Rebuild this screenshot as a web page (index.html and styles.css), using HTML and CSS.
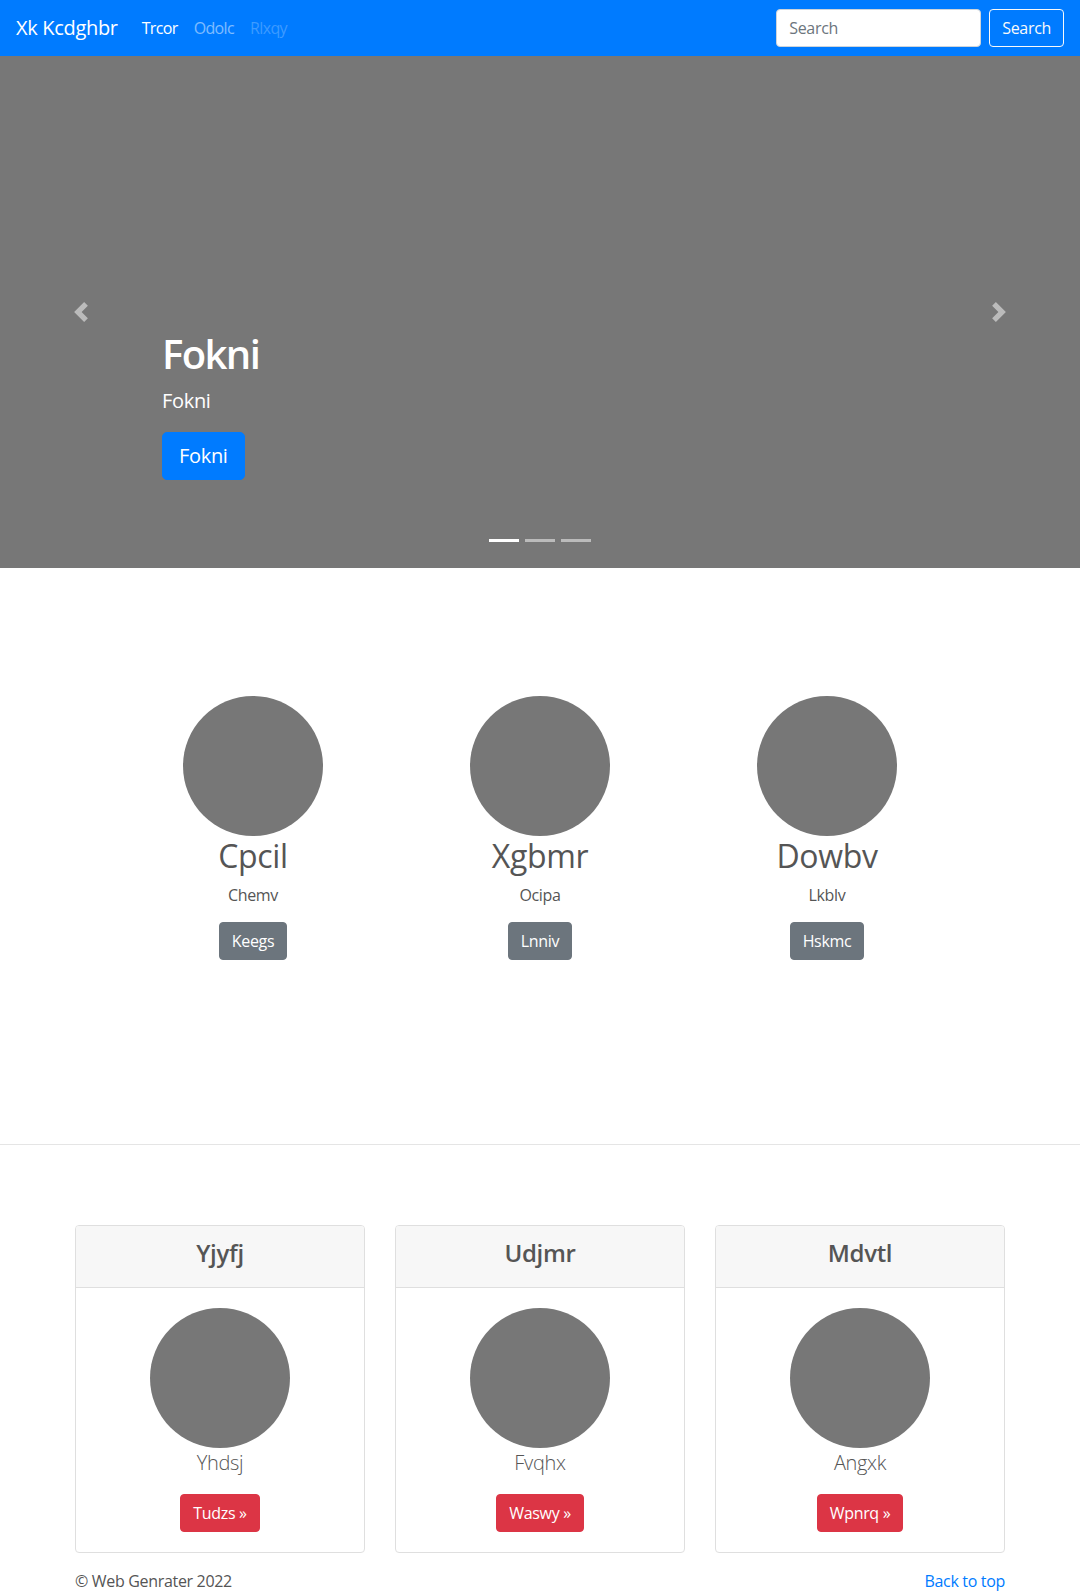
FILE: index.html
```html
<!DOCTYPE html>
<html lang="en">
<head>
<meta charset="utf-8">
<title>Xk Kcdghbr</title>
<link rel="stylesheet" href="styles.css">
</head>
<body>
<nav class="navbar">
  <a class="brand" href="#">Xk Kcdghbr</a>
  <ul class="nav">
    <li><a class="nav-link active" href="#">Trcor</a></li>
    <li><a class="nav-link" href="#">Odolc</a></li>
    <li><a class="nav-link disabled" href="#">Rlxqy</a></li>
  </ul>
  <form class="search">
    <input class="search-input" type="text" placeholder="Search">
    <button class="btn btn-outline-light" type="button">Search</button>
  </form>
</nav>

<div class="carousel">
  <a class="carousel-control prev" href="#"><svg width="20" height="20" viewBox="0 0 8 8"><path fill="#fff" d="M5.25 0l-4 4 4 4 1.5-1.5L4.25 4l2.5-2.5L5.25 0z"/></svg></a>
  <div class="carousel-caption">
    <h1 class="caption-title">Fokni</h1>
    <p class="caption-text">Fokni</p>
    <a class="btn btn-lg btn-primary" href="#">Fokni</a>
  </div>
  <a class="carousel-control next" href="#"><svg width="20" height="20" viewBox="0 0 8 8"><path fill="#fff" d="M2.75 0l-1.5 1.5L3.75 4l-2.5 2.5L2.75 8l4-4-4-4z"/></svg></a>
  <ol class="indicators">
    <li class="indicator active"></li>
    <li class="indicator"></li>
    <li class="indicator"></li>
  </ol>
</div>

<section class="marketing">
  <div class="feature">
    <div class="circle"></div>
    <h2 class="feature-title">Cpcil</h2>
    <p class="feature-text">Chemv</p>
    <a class="btn btn-secondary" href="#">Keegs</a>
  </div>
  <div class="feature">
    <div class="circle"></div>
    <h2 class="feature-title">Xgbmr</h2>
    <p class="feature-text">Ocipa</p>
    <a class="btn btn-secondary" href="#">Lnniv</a>
  </div>
  <div class="feature">
    <div class="circle"></div>
    <h2 class="feature-title">Dowbv</h2>
    <p class="feature-text">Lkblv</p>
    <a class="btn btn-secondary" href="#">Hskmc</a>
  </div>
</section>

<hr class="divider">

<section class="cards">
  <div class="card">
    <div class="card-header"><h4 class="card-title">Yjyfj</h4></div>
    <div class="card-body">
      <div class="circle"></div>
      <p class="lead">Yhdsj</p>
      <a class="btn btn-danger" href="#">Tudzs »</a>
    </div>
  </div>
  <div class="card">
    <div class="card-header"><h4 class="card-title">Udjmr</h4></div>
    <div class="card-body">
      <div class="circle"></div>
      <p class="lead">Fvqhx</p>
      <a class="btn btn-danger" href="#">Waswy »</a>
    </div>
  </div>
  <div class="card">
    <div class="card-header"><h4 class="card-title">Mdvtl</h4></div>
    <div class="card-body">
      <div class="circle"></div>
      <p class="lead">Angxk</p>
      <a class="btn btn-danger" href="#">Wpnrq »</a>
    </div>
  </div>
</section>

<footer class="footer">
  <p class="copy">© Web Genrater 2022</p>
  <a class="back" href="#">Back to top</a>
</footer>
</body>
</html>
```

FILE: styles.css
```css
* { box-sizing: border-box; }

body {
  margin: 0;
  font-family: "Open Sans", "Noto Sans", "Liberation Sans", sans-serif;
  font-size: 16px;
  line-height: 1.5;
  letter-spacing: -0.02em;
  color: #555;
  background: #fff;
}

a { text-decoration: none; }

/* Navbar */
.navbar {
  height: 56px;
  background: #007bff;
  padding: 8px 16px;
  display: flex;
  align-items: center;
}
.brand {
  color: #fff;
  font-size: 20px;
  line-height: 30px;
  margin-right: 16px;
}
.nav {
  list-style: none;
  margin: 0;
  padding: 0;
  display: flex;
}
.nav-link {
  display: block;
  padding: 8px;
  letter-spacing: -0.04em;
  color: rgba(255,255,255,.5);
}
.nav-link.active { color: #fff; }
.nav-link.disabled { color: rgba(255,255,255,.25); }

.search {
  margin-left: auto;
  display: flex;
  align-items: center;
  gap: 8px;
}
.search-input {
  width: 205px;
  height: 38px;
  padding: 6px 12px;
  font: inherit;
  letter-spacing: inherit;
  color: #495057;
  border: 1px solid #ced4da;
  border-radius: 4px;
  background: #fff;
}
.search-input::placeholder { color: #6c757d; }

/* Buttons */
.btn {
  display: inline-block;
  font: inherit;
  letter-spacing: inherit;
  line-height: 24px;
  padding: 6px 12px;
  border: 1px solid transparent;
  border-radius: 4px;
  color: #fff;
  cursor: pointer;
}
.btn-outline-light {
  background: transparent;
  color: #f8f9fa;
  border-color: #f8f9fa;
}
.btn-lg {
  font-size: 20px;
  line-height: 30px;
  padding: 8px 16px;
  border-radius: 5px;
}
.btn-primary { background: #007bff; border-color: #007bff; }
.btn-secondary { background: #6c757d; border-color: #6c757d; }
.btn-danger { background: #dc3545; border-color: #dc3545; }

/* Carousel */
.carousel {
  position: relative;
  height: 512px;
  background: #777;
}
.carousel-control {
  position: absolute;
  top: 0;
  bottom: 0;
  width: 15%;
  display: flex;
  align-items: center;
  justify-content: center;
  opacity: .5;
}
.carousel-control svg { display: block; }
.carousel-control.prev { left: 0; }
.carousel-control.next { right: 0; }

.carousel-caption {
  position: absolute;
  left: 15%;
  right: 15%;
  bottom: 88px;
  color: #fff;
}
.caption-title {
  margin: 0 0 8px;
  font-size: 40px;
  line-height: 48px;
  font-weight: 600;
  letter-spacing: -0.04em;
}
.caption-text {
  margin: 0 0 16px;
  font-size: 20px;
  line-height: 30px;
}

.indicators {
  position: absolute;
  left: 0;
  right: 0;
  bottom: 16px;
  margin: 0;
  padding: 0;
  list-style: none;
  display: flex;
  justify-content: center;
}
.indicator {
  width: 30px;
  height: 23px;
  margin: 0 3px;
  border-top: 10px solid transparent;
  border-bottom: 10px solid transparent;
  background: #fff;
  background-clip: padding-box;
  opacity: .5;
}
.indicator.active { opacity: 1; }

/* Marketing */
.marketing {
  width: 861px;
  margin: 0 auto;
  padding-top: 128px;
  display: grid;
  grid-template-columns: repeat(3, 1fr);
}
.feature {
  display: flex;
  flex-direction: column;
  align-items: center;
  text-align: center;
}
.circle {
  width: 140px;
  height: 140px;
  border-radius: 50%;
  background: #777;
}
.feature-title {
  margin: 1px 0 8px;
  font-size: 32px;
  line-height: 38.4px;
  font-weight: 400;
}
.feature-text {
  margin: 0 0 15px;
}

.divider {
  margin: 184px 0 80px;
  border: 0;
  border-top: 1px solid #e5e5e5;
  height: 0;
}

/* Cards */
.cards {
  width: 930px;
  margin: 0 auto;
  display: grid;
  grid-template-columns: repeat(3, 1fr);
  gap: 30px;
}
.card {
  border: 1px solid #dfdfdf;
  border-radius: 4px;
  overflow: hidden;
  text-align: center;
}
.card-header {
  background: #f7f7f7;
  padding: 13px 20px 11px;
  border-bottom: 1px solid #dfdfdf;
}
.card-title {
  margin: 0 0 8px;
  font-size: 24px;
  line-height: 28.8px;
  font-weight: 600;
}
.card-body {
  padding: 20px;
  display: flex;
  flex-direction: column;
  align-items: center;
}
.lead {
  margin: 0 0 16px;
  font-size: 20px;
  line-height: 30px;
  font-weight: 300;
}

/* Footer */
.footer {
  width: 930px;
  margin: 16px auto 0;
  display: flex;
  justify-content: space-between;
}
.copy { margin: 0; }
.back { color: #007bff; }
```
